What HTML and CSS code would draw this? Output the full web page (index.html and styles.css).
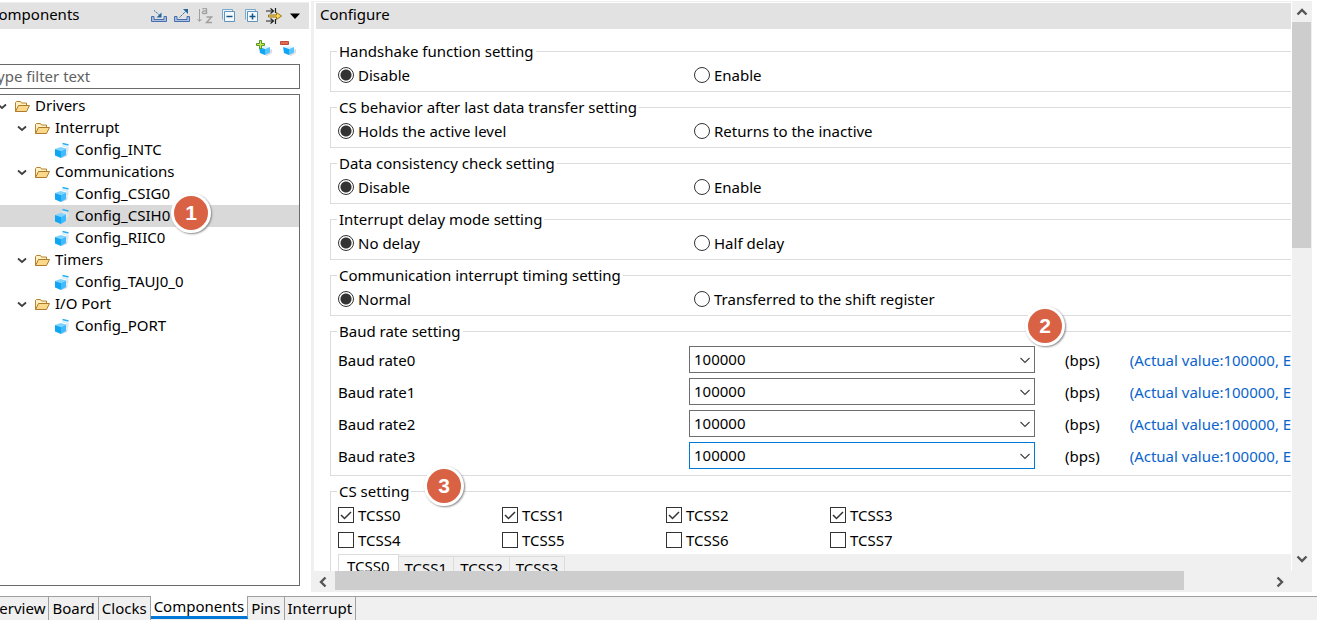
FILE: index.html
```html
<!DOCTYPE html>
<html lang="en">
<head>
<meta charset="utf-8">
<title>Components</title>
<link rel="stylesheet" href="styles.css">
</head>
<body>
<svg class="defs" aria-hidden="true">
  <symbol id="chevron" viewBox="0 0 16 16"><path d="M4 6.500l4 3.500 4-3.500" fill="none" stroke="#404040" stroke-width="1.800"/></symbol>
  <symbol id="folder" viewBox="0 0 16 16">
    <path d="M1.500 13.500v-9l1-1h4l1 1.500h5v3" fill="#fff0c0" stroke="#b9812f"/>
    <path d="M1.500 13.500l3-6h11l-3 6z" fill="#fbd98a" stroke="#b07a2c"/>
  </symbol>
  <symbol id="cube" viewBox="0 0 16 16">
    <path d="M9 14l5-4-1 4-5 2z" fill="#dcdcdc"/>
    <path d="M12 6l2.500-2v5L12 11z" fill="#e2e6e8"/>
    <path d="M1 7l5.500-2L12 6.500 7 9z" fill="#7fd4ff"/>
    <path d="M1 7l6 2v7l-6-2.500z" fill="#12a5f4"/>
    <path d="M7 9l5-2.500V13l-5 3z" fill="#3fbcff"/>
    <path d="M8.500 1.500l6 1.500" fill="none" stroke="#27aef5" stroke-width="1.800"/>
    <path d="M8 3.500l5 1.500" fill="none" stroke="#d5ecf8" stroke-width="1.500"/>
  </symbol>
  <symbol id="box" viewBox="0 0 16 16">
    <path d="M5 13.500l6 2.500 5-3v-4" fill="#dedede"/>
    <path d="M3 7l5 2 6-2-5-1z" fill="#d9f2ff"/>
    <path d="M3 7l6 2v6l-5-2z" fill="#12a5f4"/>
    <path d="M9 9l5-2v5.500L9 15z" fill="#55c5ff"/>
  </symbol>
  <symbol id="down" viewBox="0 0 16 16"><path d="M3.500 6l4.500 4.500L12.500 6" fill="none" stroke="#444" stroke-width="1.200"/></symbol>
  <symbol id="arrow" viewBox="0 0 16 16"><path d="M3.500 5.500L8 10l4.500-4.500" fill="none" stroke="#555" stroke-width="2.400"/></symbol>
</svg>

<div class="workspace">
  <section class="components">
    <header class="bar">
      <h2>Components</h2>
      <div class="tools">
        <button aria-label="Import"><svg viewBox="0 0 16 16"><path d="M3 8.500H.5v5h15v-5H13v3H3z" fill="#a9c0e6" stroke="#4a6ea9"/><path d="M3 2.500l6 5" fill="none" stroke="#24679c" stroke-dasharray="1.500 .8"/><path d="M10.500 4.500v5h-5z" fill="#24679c"/></svg></button>
        <button aria-label="Export"><svg viewBox="0 0 16 16"><path d="M3 8.500H.5v5h15v-5H13v3H3z" fill="#a9c0e6" stroke="#4a6ea9"/><path d="M5.500 9.500l6-6" fill="none" stroke="#24679c" stroke-dasharray="1.500 .8"/><path d="M9 1h5v5z" fill="#24679c"/></svg></button>
        <button aria-label="Sort"><svg viewBox="0 0 16 16"><path d="M2.500 1v12M.5 11l2 2.500 2-2.500" fill="none" stroke="#a0a0a0"/><path d="M5.500 1q4-2 4 .5v4.500M9.500 3q-4-.5-4 1.500t4 .5" fill="none" stroke="#a0a0a0" stroke-width="1.400"/><path d="M9.500 9h5l-5 5.500h5.500" fill="none" stroke="#a0a0a0" stroke-width="1.400"/></svg></button>
        <button aria-label="Collapse all"><svg viewBox="0 0 16 16"><path d="M2.500 11.500v-10h10v2" fill="#e8f3fa" stroke="#7ba7c9"/><path d="M4.500 3.500h10v10h-10z" fill="#f3faff" stroke="#6293b8"/><path d="M6.500 8.500h6" stroke="#155487" stroke-width="1.500"/></svg></button>
        <button aria-label="Expand all"><svg viewBox="0 0 16 16"><path d="M2.500 11.500v-10h10v2" fill="#e8f3fa" stroke="#7ba7c9"/><path d="M4.500 3.500h10v10h-10z" fill="#f3faff" stroke="#6293b8"/><path d="M6.500 8.500h6M9.500 5.500v6" stroke="#155487" stroke-width="1.500"/></svg></button>
        <button aria-label="Link"><svg viewBox="0 0 16 16"><path d="M0 3h7M4.500 .5L7.500 3l-3 2.500M0 13h7M4.500 10.500l3 2.500-3 2.500M9.500 0v5M9.500 11v5" fill="none" stroke="#222" stroke-width="1.200"/><path d="M2.500 7h8V4.500l5 3.500-5 3.500V9h-8z" fill="#ffd65c" stroke="#987615"/></svg></button>
        <button class="menu" aria-label="View menu"><svg viewBox="0 0 16 16"><path d="M3 5.500h10L8 11z" fill="#000"/></svg></button>
      </div>
    </header>
    <div class="actions">
      <button aria-label="Add component"><svg viewBox="0 0 16 16"><use href="#box"/><path d="M3.500 .5h2v3h3v2h-3v3h-2v-3h-3v-2h3z" fill="#c9e650" stroke="#56952a"/></svg></button>
      <button aria-label="Remove component"><svg viewBox="0 0 16 16"><use href="#box"/><path d="M.5 1.500h8v3h-8z" fill="#df6b52" stroke="#c14a3b"/></svg></button>
    </div>
    <input class="filter" type="text" placeholder="Type filter text" aria-label="Type filter text">
    <ul class="tree">
      <li class="l0"><svg><use href="#chevron"/></svg><svg><use href="#folder"/></svg><span>Drivers</span></li>
      <li class="l1"><svg><use href="#chevron"/></svg><svg><use href="#folder"/></svg><span>Interrupt</span></li>
      <li class="l2"><svg><use href="#cube"/></svg><span>Config_INTC</span></li>
      <li class="l1"><svg><use href="#chevron"/></svg><svg><use href="#folder"/></svg><span>Communications</span></li>
      <li class="l2"><svg><use href="#cube"/></svg><span>Config_CSIG0</span></li>
      <li class="l2 selected"><svg><use href="#cube"/></svg><span>Config_CSIH0</span><b class="badge step1">1</b></li>
      <li class="l2"><svg><use href="#cube"/></svg><span>Config_RIIC0</span></li>
      <li class="l1"><svg><use href="#chevron"/></svg><svg><use href="#folder"/></svg><span>Timers</span></li>
      <li class="l2"><svg><use href="#cube"/></svg><span>Config_TAUJ0_0</span></li>
      <li class="l1"><svg><use href="#chevron"/></svg><svg><use href="#folder"/></svg><span>I/O Port</span></li>
      <li class="l2"><svg><use href="#cube"/></svg><span>Config_PORT</span></li>
    </ul>
  </section>

  <section class="configure">
    <div class="view">
      <div class="pane">
        <header class="bar"><h2>Configure</h2></header>
        <form class="settings">
          <fieldset><legend>Handshake function setting</legend>
            <div class="pair"><label><input type="radio" name="hs" checked>Disable</label><label><input type="radio" name="hs">Enable</label></div></fieldset>
          <fieldset><legend>CS behavior after last data transfer setting</legend>
            <div class="pair"><label><input type="radio" name="cs" checked>Holds the active level</label><label><input type="radio" name="cs">Returns to the inactive</label></div></fieldset>
          <fieldset><legend>Data consistency check setting</legend>
            <div class="pair"><label><input type="radio" name="dc" checked>Disable</label><label><input type="radio" name="dc">Enable</label></div></fieldset>
          <fieldset><legend>Interrupt delay mode setting</legend>
            <div class="pair"><label><input type="radio" name="dl" checked>No delay</label><label><input type="radio" name="dl">Half delay</label></div></fieldset>
          <fieldset><legend>Communication interrupt timing setting</legend>
            <div class="pair"><label><input type="radio" name="tm" checked>Normal</label><label><input type="radio" name="tm">Transferred to the shift register</label></div></fieldset>
          <fieldset><legend>Baud rate setting</legend>
            <div class="baud">
              <label for="b0">Baud rate0</label><span class="combo"><select id="b0"><option>100000</option></select><svg><use href="#down"/></svg></span><span>(bps)</span><span class="actual">(Actual value:100000, E</span>
              <label for="b1">Baud rate1</label><span class="combo"><select id="b1"><option>100000</option></select><svg><use href="#down"/></svg></span><span>(bps)</span><span class="actual">(Actual value:100000, E</span>
              <label for="b2">Baud rate2</label><span class="combo"><select id="b2"><option>100000</option></select><svg><use href="#down"/></svg></span><span>(bps)</span><span class="actual">(Actual value:100000, E</span>
              <label for="b3">Baud rate3</label><span class="combo"><select id="b3" class="active"><option>100000</option></select><svg><use href="#down"/></svg></span><span>(bps)</span><span class="actual">(Actual value:100000, E</span>
            </div>
            <b class="badge step2">2</b></fieldset>
          <fieldset><legend>CS setting</legend>
            <div class="checks">
              <label><input type="checkbox" checked>TCSS0</label><label><input type="checkbox" checked>TCSS1</label><label><input type="checkbox" checked>TCSS2</label><label><input type="checkbox" checked>TCSS3</label>
              <label><input type="checkbox">TCSS4</label><label><input type="checkbox">TCSS5</label><label><input type="checkbox">TCSS6</label><label><input type="checkbox">TCSS7</label>
            </div>
            <div class="subtabs"><button type="button" class="on">TCSS0</button><button type="button">TCSS1</button><button type="button">TCSS2</button><button type="button">TCSS3</button></div>
            <b class="badge step3">3</b></fieldset>
        </form>
      </div>
      <div class="vscroll"><button class="up" aria-label="Scroll up"><svg><use href="#arrow"/></svg></button><div class="track"><div class="thumb"></div></div><button class="down" aria-label="Scroll down"><svg><use href="#arrow"/></svg></button></div>
    </div>
    <div class="hscroll"><button class="left" aria-label="Scroll left"><svg><use href="#arrow"/></svg></button><div class="track"><div class="thumb"></div></div><button class="right" aria-label="Scroll right"><svg><use href="#arrow"/></svg></button></div>
  </section>
</div>
<nav class="pages"><button>Overview</button><button>Board</button><button>Clocks</button><button class="on">Components</button><button>Pins</button><button>Interrupt</button></nav>
</body>
</html>
```
FILE: styles.css
```css
* { box-sizing: border-box; }
body {
  margin: 0;
  height: 100vh;
  display: flex;
  flex-direction: column;
  overflow: hidden;
  background: #fff;
  color: #000;
  font: 15px/20px "Noto Sans", "Open Sans", sans-serif;
}
button, input, select { font: inherit; color: inherit; margin: 0; }
button { border: 0; padding: 0; background: none; }
svg { width: 16px; height: 16px; flex: none; display: block; }
.defs { position: absolute; width: 0; height: 0; }

.workspace { flex: 1; min-height: 0; display: flex; }
.bar {
  height: 26px;
  flex: none;
  display: flex;
  align-items: center;
  background: #e2e2e2;
}
.bar h2 { margin: 0; font-size: 15px; font-weight: 400; line-height: 22px; padding-bottom: 4px; }

/* component tree, partly scrolled off the left edge */
.components {
  width: 321px;
  margin-left: -12px;
  flex: none;
  display: flex;
  flex-direction: column;
  padding: 3px 0 10px;
  box-shadow: inset 0 2px #fff, inset 0 3px #eee;
}
.components .bar { justify-content: space-between; padding: 0 6px 0 1px; }
.tools { display: flex; gap: 7px; }
.tools .menu { margin-left: -2px; }
.actions { height: 35px; display: flex; justify-content: flex-end; align-items: center; gap: 8px; padding: 3px 13px 0 0; }
.filter {
  height: 25px;
  margin: 0 9px 5px 0;
  padding: 0 0 2px;
  border: 1px solid #6a6a6a;
  border-radius: 0;
}
.filter::placeholder { color: #626262; opacity: 1; }
.tree {
  flex: 1;
  list-style: none;
  margin: 0 9px 0 0;
  padding: 0;
  border: 1px solid #6a6a6a;
}
.tree li { position: relative; height: 22px; display: flex; align-items: center; gap: 4px; }
.tree span { padding: 0 0 2px 1px; }
.tree .l0 { padding-left: 5px; }
.tree .l1 { padding-left: 25px; }
.tree .l2 { padding-left: 65px; }
.tree .selected { background: #d9d9d9; }

.badge {
  position: absolute;
  z-index: 2;
  width: 40px;
  height: 40px;
  border: 3px solid #fff;
  border-radius: 50%;
  background: #d96245;
  color: #fff;
  font: bold 21px/34px "Liberation Sans", Arial, sans-serif;
  text-align: center;
  box-shadow: 1px 1px 2px #888;
}
.step1 { left: 182px; top: -12px; }
.step2 { left: 694px; top: -35px; }
.step3 { left: 93px; top: -35px; }

.configure { flex: 1; min-width: 0; display: flex; flex-direction: column; padding: 1px 5px 4px 2px; }
.view { flex: 1; min-height: 0; display: flex; }
.pane {
  flex: 1;
  min-width: 0;
  overflow: hidden;
  margin-right: 1px;
  border-top: 1px solid #eee;
  border-left: 3px solid #f0f0f0;
  padding: 1px 0 0 2px;
}
.pane .bar { padding-left: 4px; }
.settings { min-width: 1120px; padding: 12px 0 0 14px; display: flex; flex-direction: column; gap: 5px; }
fieldset { position: relative; margin: 0; padding: 3px 7px 5px; border: 1px solid #dcdcdc; }
legend { margin-left: -1px; padding: 0 2px; height: 20px; }
.pair { display: grid; grid-template-columns: 356px 1fr; }
label { display: flex; align-items: center; }
.pair label, .checks label { gap: 4px; height: 22px; }

input[type="radio"], input[type="checkbox"] {
  appearance: none;
  width: 16px;
  height: 16px;
  border: 1px solid #333;
  background: #fff;
}
input[type="radio"] { border-radius: 50%; }
input[type="radio"]:checked { background: radial-gradient(circle, #333 5px, #fff 6px); }
input[type="checkbox"]:checked {
  background: url("data:image/svg+xml,%3Csvg xmlns='http://www.w3.org/2000/svg' viewBox='0 0 14 14'%3E%3Cpath d='M2 7l3.500 3.500L12 4' fill='none' stroke='%23333' stroke-width='1.500'/%3E%3C/svg%3E");
}

.baud { display: grid; grid-template-columns: 351px 346px auto 1fr; row-gap: 5px; align-items: center; padding: 2px 0 1px; }
.baud > span:nth-child(4n + 3) { padding: 0 30px; }
.combo { display: grid; align-items: center; }
.combo select, .combo svg { grid-area: 1 / 1; }
.combo svg { justify-self: end; margin-right: 2px; pointer-events: none; }
.combo select { appearance: none; height: 27px; border: 1px solid #6e6e6e; border-radius: 0; background: #fff; padding: 0 20px 2px 4px; }
.combo .active { border-color: #0078d7; }
.actual { color: #0a64cc; white-space: nowrap; }

.checks { display: grid; grid-template-columns: repeat(4, 164px); row-gap: 3px; }
.subtabs { display: flex; align-items: flex-end; height: 26px; margin-top: 3px; background: #f0f0f0; }
.subtabs button { height: 24px; padding: 0 6px; border: 1px solid #dcdcdc; border-left: 0; }
.subtabs .on { height: 26px; padding: 0 8px 2px; background: #fff; border-left: 1px solid #dcdcdc; }

.vscroll, .hscroll { display: flex; background: #f0f0f0; }
.vscroll { width: 20px; flex-direction: column; }
.hscroll { height: 21px; padding-right: 20px; }
.vscroll button, .hscroll button { display: grid; place-items: center; flex: none; }
.vscroll .up { height: 21px; }
.vscroll .down { height: 24px; }
.hscroll button { width: 24px; }
.track { flex: 1; }
.vscroll .thumb { height: 43%; margin-right: 1px; background: #cdcdcd; }
.hscroll .thumb { width: 91%; height: 19px; background: #cdcdcd; }
.up svg { transform: rotate(180deg); }
.left svg { transform: rotate(90deg); }
.right svg { transform: rotate(-90deg); }

.pages {
  height: 24px;
  flex: none;
  display: flex;
  align-items: flex-start;
  margin-left: -23px;
  background: #f0f0f0;
  border-top: 1px solid #a0a0a0;
}
.pages button { height: 23px; padding: 0 3px 2px; border-right: 1px solid #a0a0a0; }
.pages .on { background: #fff; margin-top: -1px; border-bottom: 3px solid #0078d7; padding-bottom: 0; }
```
